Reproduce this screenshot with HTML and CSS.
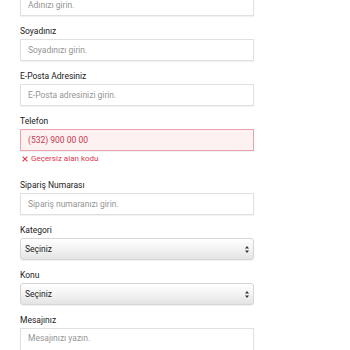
FILE: index.html
```html
<!DOCTYPE html>
<html lang="tr">
<head>
    <meta charset="UTF-8">
    <meta name="viewport" content="width=device-width, initial-scale=1.0">
    <title>İletişim Formu</title>
    <link rel="stylesheet" href="styles.css">
</head>
<body>
    <form class="contact-form">
        <div class="form-group">
            <input type="text" class="form-input" placeholder="Adınızı girin.">
        </div>

        <div class="form-group">
            <label class="form-label">Soyadınız</label>
            <input type="text" class="form-input" placeholder="Soyadınızı girin.">
        </div>

        <div class="form-group">
            <label class="form-label">E-Posta Adresiniz</label>
            <input type="email" class="form-input" placeholder="E-Posta adresinizi girin.">
        </div>

        <div class="form-group has-error">
            <label class="form-label">Telefon</label>
            <input type="tel" class="form-input" value="(532) 900 00 00">
            <div class="error-text">
                <svg class="error-icon" width="6" height="6" viewBox="0 0 6 6">
                    <path d="M0.6 0.6 L5.4 5.4 M5.4 0.6 L0.6 5.4" stroke="#e0344e" stroke-width="1.1" fill="none"/>
                </svg>
                Geçersiz alan kodu
            </div>
        </div>

        <div class="form-group">
            <label class="form-label">Sipariş Numarası</label>
            <input type="text" class="form-input" placeholder="Sipariş numaranızı girin.">
        </div>

        <div class="form-group">
            <label class="form-label">Kategori</label>
            <div class="select-wrap">
                <select class="form-select">
                    <option>Seçiniz</option>
                </select>
                <svg class="select-arrow" width="4" height="7" viewBox="0 0 4 7">
                    <path d="M2 0 L4 2.6 L0 2.6 Z M2 7 L4 4.4 L0 4.4 Z" fill="#333"/>
                </svg>
            </div>
        </div>

        <div class="form-group">
            <label class="form-label">Konu</label>
            <div class="select-wrap">
                <select class="form-select">
                    <option>Seçiniz</option>
                </select>
                <svg class="select-arrow" width="4" height="7" viewBox="0 0 4 7">
                    <path d="M2 0 L4 2.6 L0 2.6 Z M2 7 L4 4.4 L0 4.4 Z" fill="#333"/>
                </svg>
            </div>
        </div>

        <div class="form-group">
            <label class="form-label">Mesajınız</label>
            <textarea class="form-input form-textarea" placeholder="Mesajınızı yazın."></textarea>
        </div>
    </form>
</body>
</html>
```

FILE: styles.css
```css
body {
    margin: 0;
    background-color: #fff;
    font-family: Roboto, "Liberation Sans", Arial, sans-serif;
    overflow: hidden;
}
.contact-form {
    width: 234px;
    margin-top: -6px; /* sayfa biraz aşağı kaydırılmış */
    padding-left: 20px;
}
.form-group {
    display: flex;
    flex-direction: column;
    margin-bottom: 9px;
}
.form-label {
    font-size: 8.5px;
    line-height: 12px;
    color: #222;
    margin-bottom: 2px;
}
.form-input {
    box-sizing: border-box;
    width: 100%;
    height: 22px;
    padding: 0 7px;
    border: 1px solid #e0e0e0;
    border-radius: 0;
    box-shadow: 0 1px 1px rgba(0, 0, 0, 0.05);
    font-family: inherit;
    font-size: 8.5px;
    color: #444;
    background-color: #fff;
    outline: none;
}
.form-input::placeholder {
    color: #959595;
}
.has-error .form-input {
    border-color: #eaa3ad;
    background-color: #fdf1f2;
    color: #c8374b;
}
.error-text {
    display: flex;
    align-items: center;
    gap: 3px;
    margin: 2px 0 5px 2px;
    font-size: 8px;
    line-height: 12px;
    color: #e0344e;
}
.select-wrap {
    position: relative;
    height: 22px;
}
.form-select {
    display: block;
    -webkit-appearance: none;
    appearance: none;
    box-sizing: border-box;
    width: 100%;
    height: 22px;
    padding: 0 4px;
    border: 1px solid #d6d6d6;
    border-radius: 3px;
    background: linear-gradient(to bottom, #ffffff 0%, #f3f3f3 50%, #e4e4e4 100%);
    box-shadow: 0 1px 1px rgba(0, 0, 0, 0.06);
    font-family: inherit;
    font-size: 8.5px;
    color: #222;
    outline: none;
}
.select-arrow {
    position: absolute;
    right: 5px;
    top: 7.5px;
    pointer-events: none;
}
.form-textarea {
    height: 60px;
    padding-top: 3px;
    resize: none;
    line-height: 12px;
}
```
